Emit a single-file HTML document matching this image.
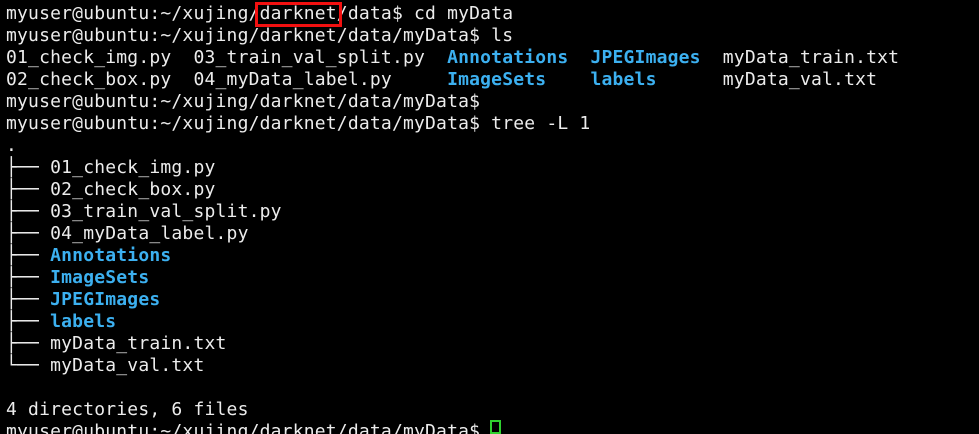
<!DOCTYPE html>
<html><head><meta charset="utf-8"><style>
html,body{margin:0;padding:0;background:#000;width:979px;height:425px;overflow:hidden;}
pre{margin:0;padding:3px 0 0 6px;font-family:"DejaVu Sans Mono","Liberation Mono",monospace;font-size:18px;letter-spacing:0.19px;line-height:22px;color:#ececec;white-space:pre;}
b{color:#3cb0f0;font-weight:bold;}
.red{position:absolute;left:255px;top:2px;width:87px;height:25px;border:3px solid #f21010;box-sizing:border-box;}
.cur{position:absolute;left:490px;top:420px;width:11px;height:14px;border:2px solid #2fd02f;box-sizing:border-box;}
</style></head><body>
<pre>myuser@ubuntu:~/xujing/darknet/data$ cd myData
myuser@ubuntu:~/xujing/darknet/data/myData$ ls
01_check_img.py  03_train_val_split.py  <b>Annotations</b>  <b>JPEGImages</b>  myData_train.txt
02_check_box.py  04_myData_label.py     <b>ImageSets</b>    <b>labels</b>      myData_val.txt
myuser@ubuntu:~/xujing/darknet/data/myData$
myuser@ubuntu:~/xujing/darknet/data/myData$ tree -L 1
.
├── 01_check_img.py
├── 02_check_box.py
├── 03_train_val_split.py
├── 04_myData_label.py
├── <b>Annotations</b>
├── <b>ImageSets</b>
├── <b>JPEGImages</b>
├── <b>labels</b>
├── myData_train.txt
└── myData_val.txt

4 directories, 6 files
myuser@ubuntu:~/xujing/darknet/data/myData$</pre>
<div class="red"></div>
<div class="cur"></div>
</body></html>
